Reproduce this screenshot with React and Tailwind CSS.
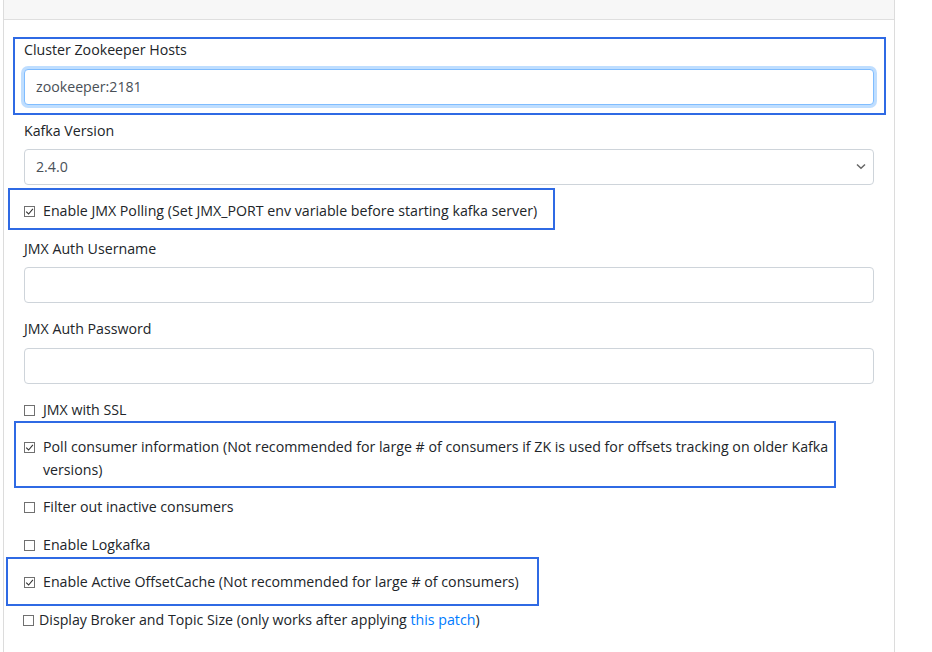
import React from 'react';

const font = { fontFamily: '"Open Sans", "Noto Sans", sans-serif' };

const Check = ({ checked }) => (
  <span className="mt-[6px] flex h-[11px] w-[11px] shrink-0 items-center justify-center border border-[#707070] bg-white">
    {checked && (
      <svg width="9" height="9" viewBox="0 0 9 9">
        <path d="M1.2 4.6 L3.6 7 L7.9 1.8" fill="none" stroke="#333" strokeWidth="1.1" />
      </svg>
    )}
  </span>
);

const CheckRow = ({ checked, children, tight }) => (
  <div className={'flex items-start ' + (tight ? 'gap-[5px] -ml-px' : 'gap-[8px]')}>
    <Check checked={checked} />
    <span>{children}</span>
  </div>
);

const Field = ({ label, children }) => (
  <div className="flex flex-col gap-[7px]">
    <label>{label}</label>
    {children}
  </div>
);

const Input = ({ value, focus }) => (
  <input
    readOnly
    value={value || ''}
    className={
      'h-[36px] w-full rounded-[4px] border bg-white px-[11px] text-[14.2px] text-[#495057] outline-none ' +
      (focus ? 'border-[#80bdff] shadow-[0_0_0_3px_rgba(0,123,255,0.25)]' : 'border-[#ced4da]')
    }
    style={font}
  />
);

export default function App() {
  return (
    <div className="min-h-[652px] w-[932px] bg-white text-[14.2px] leading-[22.5px] text-[#212529]" style={font}>
      <div className="relative ml-[3px] w-[892px] min-h-[652px] border-x border-[#dcdcdc]">
        <div className="h-[20px] border-b border-[#dfdfdf] bg-[#f7f7f7]" />
        <div className="flex flex-col gap-[15px] px-[20px] pt-[19px]">
          <Field label="Cluster Zookeeper Hosts">
            <Input value="zookeeper:2181" focus />
          </Field>
          <Field label="Kafka Version">
            <div className="relative">
              <div className="flex h-[36px] w-full items-center rounded-[4px] border border-[#ced4da] bg-white px-[11px] text-[#495057]">
                2.4.0
              </div>
              <svg className="absolute right-[8px] top-[14px]" width="10" height="7" viewBox="0 0 10 7">
                <path d="M1 1.5 L5 5.2 L9 1.5" fill="none" stroke="#666" strokeWidth="1.5" />
              </svg>
            </div>
          </Field>
          <CheckRow checked>Enable JMX Polling (Set JMX_PORT env variable before starting kafka server)</CheckRow>
          <Field label="JMX Auth Username">
            <Input />
          </Field>
          <Field label="JMX Auth Password">
            <Input />
          </Field>
          <CheckRow>JMX with SSL</CheckRow>
          <CheckRow checked>
            Poll consumer information (Not recommended for large # of consumers if ZK is used for offsets tracking on older Kafka versions)
          </CheckRow>
          <CheckRow>Filter out inactive consumers</CheckRow>
          <CheckRow>Enable Logkafka</CheckRow>
          <CheckRow checked>Enable Active OffsetCache (Not recommended for large # of consumers)</CheckRow>
          <CheckRow tight>
            Display Broker and Topic Size (only works after applying{' '}
            <a href="#" className="text-[#007bff]">this patch</a>)
          </CheckRow>
        </div>

        {/* annotation boxes */}
        <div className="pointer-events-none absolute left-[9px] top-[37px] h-[78px] w-[873px] border-2 border-[#2f6ae4]" />
        <div className="pointer-events-none absolute left-[4px] top-[188px] h-[42px] w-[547px] border-2 border-[#2f6ae4]" />
        <div className="pointer-events-none absolute left-[10px] top-[421px] h-[67px] w-[822px] border-2 border-[#2f6ae4]" />
        <div className="pointer-events-none absolute left-[2px] top-[557px] h-[49px] w-[533px] border-2 border-[#2f6ae4]" />
      </div>
    </div>
  );
}
